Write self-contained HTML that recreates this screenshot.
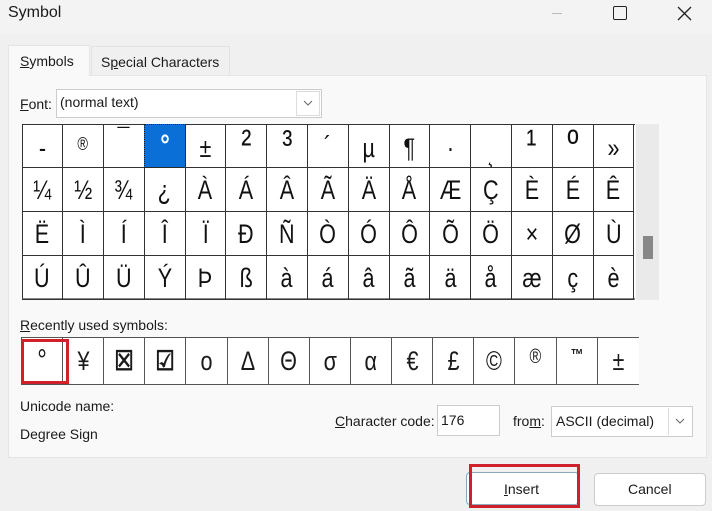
<!DOCTYPE html>
<html><head><meta charset="utf-8"><style>
*{box-sizing:border-box;margin:0;padding:0}
body{width:712px;height:511px;background:#f0f0f0;font-family:"Liberation Sans",sans-serif;color:#1a1a1a;position:relative;overflow:hidden;font-size:14px}
.abs{position:absolute}
.grid{position:absolute;left:22px;top:124px;width:613px;height:176px;background:#fff;border-left:1px solid #333;border-top:1px solid #333;border-bottom:2px solid #888}
.cell{position:absolute;width:41px;height:44px;border-right:1px solid #333;border-bottom:1px solid #333;text-align:center;font-size:27px;line-height:44px;color:#111;overflow:hidden}
.cell span,.rc span{display:inline-block;transform:scaleX(.8)}
.rc{position:absolute;top:338px;height:46px;width:41px;border-right:1px solid #555;text-align:center;font-size:27px;line-height:46px;background:#fff}
u{text-decoration:underline}
</style></head><body>
<div class="abs" style="left:0;top:0;width:712px;height:34px;background:#f3f3f3"></div>
<div class="abs" style="left:8px;top:4px;font-size:16px">Symbol</div>
<div class="abs" style="left:552px;top:13px;width:10px;height:1px;background:#bbb"></div>
<div class="abs" style="left:613px;top:6px;width:14px;height:14px;border:1.5px solid #222;border-radius:2px"></div>
<svg class="abs" style="left:677px;top:6px" width="15" height="15"><path d="M1 1L14 14M14 1L1 14" stroke="#222" stroke-width="1.3"/></svg>
<div class="abs" style="left:8px;top:75px;width:699px;height:383px;background:#f9f9f9;border:1px solid #e5e5e5"></div>
<div class="abs" style="left:8px;top:45px;width:82px;height:31px;background:#f9f9f9;border:1px solid #e5e5e5;border-bottom:none"></div>
<div class="abs" style="left:20px;top:53px;font-size:14px"><u>S</u>ymbols</div>
<div class="abs" style="left:91px;top:46px;width:139px;height:29px;background:#f0f0f0;border:1px solid #e3e3e3;border-bottom:none"></div>
<div class="abs" style="left:101px;top:54px;font-size:14px">S<u>p</u>ecial Characters</div>
<div class="abs" style="left:20px;top:96px;font-size:14px"><u>F</u>ont:</div>
<div class="abs" style="left:56px;top:89px;width:266px;height:29px;background:#fff;border:1px solid #ccc"></div>
<div class="abs" style="left:60px;top:94px;font-size:14px">(normal text)</div>
<div class="abs" style="left:296px;top:91px;width:24px;height:25px;border:1px solid #ddd;background:#fff"></div>
<svg class="abs" style="left:303px;top:100px" width="10" height="6"><path d="M1 1L5 5L9 1" stroke="#666" fill="none"/></svg>

<div class="abs" style="left:636px;top:124px;width:23px;height:176px;background:#eaeaea"></div>
<div class="abs" style="left:643px;top:236px;width:10px;height:23px;background:#888"></div>

<div class="grid" id="g"></div>

<div class="abs" style="left:20px;top:317px;font-size:14px"><u>R</u>ecently used symbols:</div>
<div class="abs" style="left:21px;top:337px;width:618px;height:48px;border:1px solid #555;background:#fff"></div>
<div id="r"></div>
<div class="abs" style="left:21px;top:339px;width:48px;height:45px;border:3px solid #d0202c"></div>

<div class="abs" style="left:20px;top:398px;font-size:14px">Unicode name:</div>
<div class="abs" style="left:20px;top:426px;font-size:14px">Degree Sign</div>
<div class="abs" style="left:335px;top:413px;font-size:14px"><u>C</u>haracter code:</div>
<div class="abs" style="left:437px;top:405px;width:63px;height:31px;background:#fff;border:1px solid #ccc"></div>
<div class="abs" style="left:441px;top:412px;font-size:14px">176</div>
<div class="abs" style="left:513px;top:413px;font-size:14px">fro<u>m</u>:</div>
<div class="abs" style="left:551px;top:406px;width:142px;height:31px;background:#fff;border:1px solid #ccc"></div>
<div class="abs" style="left:556px;top:413px;font-size:14px">ASCII (decimal)</div>
<div class="abs" style="left:668px;top:408px;width:23px;height:27px;border-left:1px solid #ddd"></div>
<svg class="abs" style="left:675px;top:418px" width="10" height="6"><path d="M1 1L5 5L9 1" stroke="#666" fill="none"/></svg>

<div class="abs" style="left:466px;top:472px;width:113px;height:33px;background:#fff;border:1px solid #8ab;border-radius:4px"></div>
<div class="abs" style="left:469px;top:464px;width:111px;height:44px;border:3px solid #d0202c"></div>
<div class="abs" style="left:504px;top:481px;font-size:14px"><u>I</u>nsert</div>
<div class="abs" style="left:594px;top:473px;width:112px;height:33px;background:#fff;border:1px solid #ccc;border-radius:4px"></div>
<div class="abs" style="left:628px;top:481px;font-size:14px">Cancel</div>

<script>
var rows=["-®¯°±²³´µ¶·¸¹º»","¼½¾¿ÀÁÂÃÄÅÆÇÈÉÊ","ËÌÍÎÏÐÑÒÓÔÕÖ×ØÙ","ÚÛÜÝÞßàáâãäåæçè"];
var g=document.getElementById('g'),h='';
var w=612/15;
for(var r=0;r<4;r++){var s=rows[r];for(var c=0;c<15;c++){var ch=s[c];var st='left:'+(c*w-1)+'px;top:'+(r*44-1)+'px;width:'+(w+0.5)+'px;';var fs='';
if(r==0){if('²³¹º'.indexOf(ch)>=0)fs='font-size:38px;line-height:40px;';else if('¸'==ch)fs='line-height:60px;';else if('®'==ch)fs='font-size:18px;line-height:40px;';else if('¯'==ch)fs='line-height:28px;';else if('·¶µ±-»'.indexOf(ch)>=0)fs='line-height:48px;';}
if(r==0&&c==3){st+='background:#0a6fd6;color:#fff;outline:1px dotted #222;outline-offset:-1px;';fs='font-size:30px;line-height:44px;font-weight:bold;';}
h+='<div class="cell" style="'+st+fs+'"><span>'+ch+'</span></div>';}}
g.innerHTML=h;
var rc=["°","¥","☒","☑","o","Δ","Θ","σ","α","€","£","©","®","™","±"];
var hh='';
for(var i=0;i<15;i++){var fs='';if(rc[i]=='°')fs='font-size:30px;line-height:46px;';if(rc[i]=='®')fs='font-size:20px;line-height:38px;';if(rc[i]=='™')fs='font-size:16px;line-height:36px;font-weight:bold;';if(rc[i]=='☒'||rc[i]=='☑')fs='font-weight:bold;';
hh+='<div class="rc" style="left:'+(22+i*41.13)+'px;'+fs+(i==14?'border-right:none;':'')+'"><span>'+rc[i]+'</span></div>';}
document.getElementById('r').innerHTML=hh;
</script>
</body></html>
